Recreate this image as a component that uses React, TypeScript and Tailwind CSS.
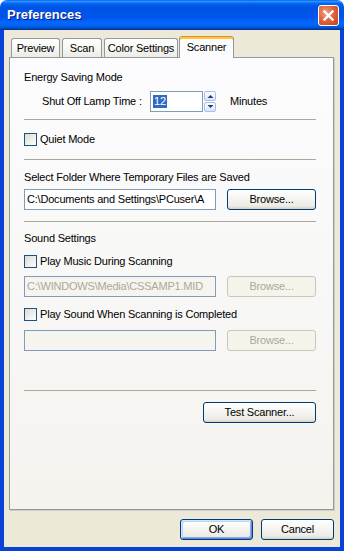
import React from "react";

function Check({ label }: { label: string }) {
  return (
    <div className="flex items-center h-[13px] shrink-0">
      <span className="w-[13px] h-[13px] shrink-0 border border-[#1C5180] bg-[linear-gradient(135deg,#DCDCD7,#F0F0EC_60%,#FFFFFF)]" />
      <span className="ml-[3px] whitespace-nowrap">{label}</span>
    </div>
  );
}

function Sep({ className }: { className: string }) {
  return <div className={"h-px bg-[#ACA899] shrink-0 " + className} />;
}

function Btn({
  children,
  className,
  disabled,
  isDefault,
}: {
  children: React.ReactNode;
  className: string;
  disabled?: boolean;
  isDefault?: boolean;
}) {
  const base =
    "h-[21px] rounded-[3px] border flex items-center justify-center shrink-0 whitespace-nowrap ";
  const look = disabled
    ? "border-[#C9C7BA] bg-[#F5F4EA] text-[#ACA899] "
    : isDefault
    ? "border-[#003C74] bg-[linear-gradient(#FFFFFF,#F6F6F2_40%,#ECEBE6_85%,#D6D0C5)] shadow-[inset_1px_1px_0_#CEE7FF,inset_-1px_-1px_0_#6982EE,inset_2px_2px_0_#BCD4F6,inset_-2px_-2px_0_#89ADE4] "
    : "border-[#003C74] bg-[linear-gradient(#FFFFFF,#F6F6F2_40%,#ECEBE6_85%,#D6D0C5)] ";
  return <div className={base + look + className}>{children}</div>;
}

function SpinArrow({ up }: { up?: boolean }) {
  return (
    <svg width="7" height="4" viewBox="0 0 7 4">
      {up ? <path d="M0.5 4 L3.5 1 L6.5 4Z" fill="#2B3B63" /> : <path d="M0.5 0 L3.5 3 L6.5 0Z" fill="#2B3B63" />}
    </svg>
  );
}

function CloseBtn() {
  return (
    <div className="w-[21px] h-[21px] rounded-[3px] border border-white bg-[radial-gradient(circle_at_35%_35%,#F2A083,#E2633D_45%,#C8401C)] flex items-center justify-center shrink-0">
      <svg width="13" height="13" viewBox="0 0 13 13">
        <path d="M2.5 2.5 L10.5 10.5 M10.5 2.5 L2.5 10.5" stroke="#FFFFFF" strokeWidth="2.4" strokeLinecap="square" />
      </svg>
    </div>
  );
}

export default function App() {
  return (
    <div className="w-[344px] h-[551px] flex flex-col bg-white font-['Liberation_Sans',Arial,sans-serif] text-[11px] leading-[13px] text-black tracking-[-0.2px] select-none">
      {/* Title bar */}
      <div className="h-[30px] shrink-0 rounded-t-[7px] bg-[linear-gradient(#0058EE_0%,#3593FF_4%,#288EFF_6%,#127DFF_8%,#036FFC_10%,#0262EE_14%,#0057E5_20%,#0054E3_24%,#0055EB_56%,#005BF5_66%,#026AFE_76%,#0062EF_86%,#0052D6_92%,#0040AB_96%,#003092_100%)] flex items-center pl-[7px] pr-[5px]">
        <span className="flex-1 text-white font-bold text-[13px] tracking-normal leading-[16px] [text-shadow:1px_1px_0_#0A1883]">
          Preferences
        </span>
        <CloseBtn />
      </div>

      {/* Body */}
      <div className="flex-1 min-h-0 flex flex-col bg-[#ECE9D8] border-x-4 border-b-4 border-[#0842D6]">
        <div className="ml-[5px] w-[325px] flex-1 min-h-0 flex flex-col pt-[6px]">
          {/* Tabs */}
          <div className="h-[21px] shrink-0 flex items-end pl-[2px]">
            <div className="w-[49px] h-[19px] rounded-t-[3px] border border-b-0 border-[#919B9C] bg-[linear-gradient(#FFFFFF,#F7F7F4_50%,#ECEBE6)] flex items-center justify-center">
              Preview
            </div>
            <div className="ml-[2px] w-[40px] h-[19px] rounded-t-[3px] border border-b-0 border-[#919B9C] bg-[linear-gradient(#FFFFFF,#F7F7F4_50%,#ECEBE6)] flex items-center justify-center">
              Scan
            </div>
            <div className="ml-[2px] w-[74px] h-[19px] rounded-t-[3px] border border-b-0 border-[#919B9C] bg-[linear-gradient(#FFFFFF,#F7F7F4_50%,#ECEBE6)] flex items-center justify-center">
              Color Settings
            </div>
            <div className="relative z-10 -mb-px ml-px w-[55px] h-[22px] rounded-t-[3px] border border-b-0 border-[#919B9C] border-t-[#E68B2C] bg-[#FCFCFE] shadow-[inset_0_2px_0_#FFC73C] flex items-center justify-center pb-[1px]">
              Scanner
            </div>
          </div>

          {/* Panel */}
          <div className="flex-1 min-h-0 border border-[#919B9C] bg-[linear-gradient(#FCFCFE,#F4F3EE)] flex flex-col pl-[14px] pr-[17px] shadow-[1px_1px_0_#D0CEBF]">
            <div className="mt-[13px] h-[13px] shrink-0">Energy Saving Mode</div>

            <div className="mt-[7px] h-[21px] shrink-0 flex items-center">
              <div className="ml-[18px] w-[108px] whitespace-nowrap">Shut Off Lamp Time :</div>
              <div className="w-[53px] h-[21px] border border-[#7F9DB9] bg-white flex items-center pl-[2px]">
                <span className="bg-[#316AC5] text-white leading-[13px] px-px">12</span>
              </div>
              <div className="ml-px w-[12px] h-[21px] flex flex-col gap-px">
                <div className="h-[10px] rounded-[2px] border border-[#A9BFEE] bg-[linear-gradient(#FFFFFF,#EEF3FD_50%,#D8E3FA)] flex items-center justify-center">
                  <SpinArrow up />
                </div>
                <div className="h-[10px] rounded-[2px] border border-[#A9BFEE] bg-[linear-gradient(#FFFFFF,#EEF3FD_50%,#D8E3FA)] flex items-center justify-center">
                  <SpinArrow />
                </div>
              </div>
              <div className="ml-[14px]">Minutes</div>
            </div>

            <Sep className="mt-[7px]" />

            <div className="mt-[13px]">
              <Check label="Quiet Mode" />
            </div>

            <Sep className="mt-[13px]" />

            <div className="mt-[11px] h-[13px] shrink-0 whitespace-nowrap">Select Folder Where Temporary Files are Saved</div>

            <div className="mt-[5px] h-[21px] shrink-0 flex items-center">
              <div className="w-[192px] h-[21px] border border-[#7F9DB9] bg-white flex items-center pl-[2px] overflow-hidden whitespace-nowrap">
                {"C:\\Documents and Settings\\PCuser\\A"}
              </div>
              <Btn className="ml-[11px] w-[89px] h-[20px]">Browse...</Btn>
            </div>

            <Sep className="mt-[11px]" />

            <div className="mt-[10px] h-[13px] shrink-0">Sound Settings</div>

            <div className="mt-[10px]">
              <Check label="Play Music During Scanning" />
            </div>

            <div className="mt-[8px] h-[21px] shrink-0 flex items-center">
              <div className="w-[192px] h-[21px] border border-[#7F9DB9] bg-[#F5F4EF] text-[#ACA899] flex items-center pl-[2px] overflow-hidden whitespace-nowrap">
                {"C:\\WINDOWS\\Media\\CSSAMP1.MID"}
              </div>
              <Btn className="ml-[11px] w-[89px] h-[20px]" disabled>
                Browse...
              </Btn>
            </div>

            <div className="mt-[11px]">
              <Check label="Play Sound When Scanning is Completed" />
            </div>

            <div className="mt-[9px] h-[21px] shrink-0 flex items-center">
              <div className="w-[192px] h-[21px] border border-[#7F9DB9] bg-[#F5F4EF]" />
              <Btn className="ml-[11px] w-[89px] h-[20px]" disabled>
                Browse...
              </Btn>
            </div>

            <Sep className="mt-[39px]" />

            <div className="mt-[11px] flex justify-end">
              <Btn className="w-[113px]">Test Scanner...</Btn>
            </div>
          </div>
        </div>

        {/* Bottom buttons */}
        <div className="mt-[9px] mb-[7px] h-[21px] shrink-0 flex justify-end pr-[6px] gap-[8px]">
          <Btn className="w-[73px]" isDefault>
            OK
          </Btn>
          <Btn className="w-[73px]">Cancel</Btn>
        </div>
      </div>
    </div>
  );
}
